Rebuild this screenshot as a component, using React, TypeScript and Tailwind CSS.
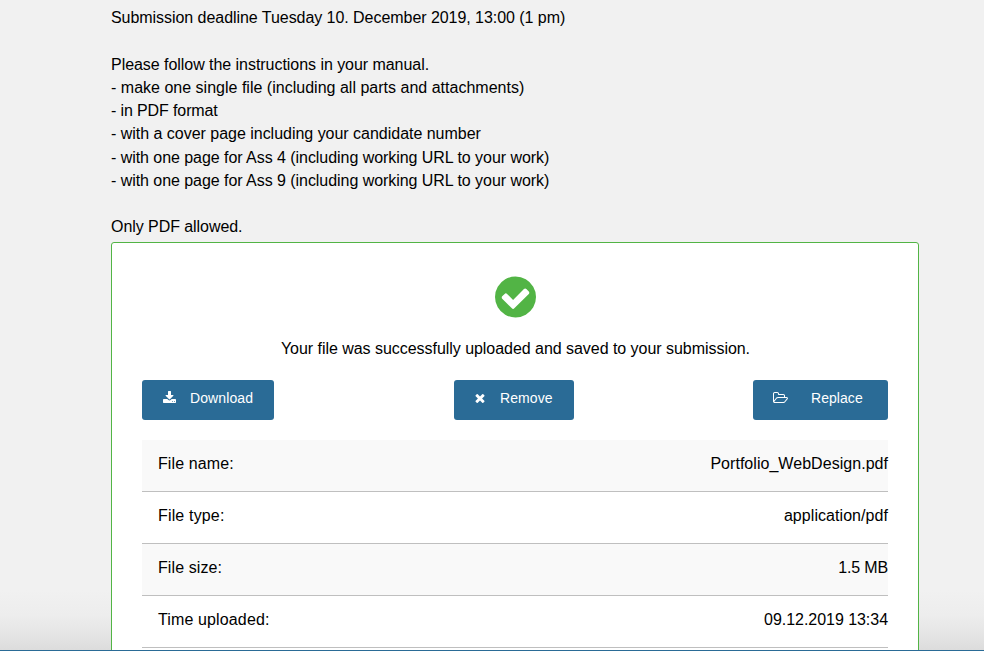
const instructions = [
  { text: "Submission deadline Tuesday 10. December 2019, 13:00 (1 pm)", style: "h-[23px] tracking-[-0.05px]" },
  { text: "", style: "h-6" },
  { text: "Please follow the instructions in your manual.", style: "h-[23px] tracking-[-0.045px]" },
  { text: "- make one single file (including all parts and attachments)", style: "h-[23px] tracking-[0.01px]" },
  { text: "- in PDF format", style: "h-[23px] tracking-[-0.12px]" },
  { text: "- with a cover page including your candidate number", style: "h-6 tracking-[-0.02px]" },
  { text: "- with one page for Ass 4 (including working URL to your work)", style: "h-[23px] tracking-[-0.05px]" },
  { text: "- with one page for Ass 9 (including working URL to your work)", style: "h-[23px] tracking-[-0.05px]" },
  { text: "", style: "h-[23px]" },
  { text: "Only PDF allowed.", style: "h-[23px] tracking-[-0.06px]" },
];

const details = [
  { label: "File name:", value: "Portfolio_WebDesign.pdf", labelStyle: "tracking-[0.1px]", valueStyle: "tracking-[0.04px]" },
  { label: "File type:", value: "application/pdf", labelStyle: "tracking-[0.16px]", valueStyle: "tracking-[0.06px]" },
  { label: "File size:", value: "1.5 MB", labelStyle: "tracking-[0.1px]", valueStyle: "tracking-[-0.15px]" },
  { label: "Time uploaded:", value: "09.12.2019 13:34", labelStyle: "tracking-[0.13px]", valueStyle: "tracking-[-0.04px]" },
];

const icons = {
  check: "M1284 734q0-28-18-46l-91-90q-19-19-45-19t-45 19l-408 407-226-226q-19-19-45-19t-45 19l-91 90q-18 18-18 46 0 27 18 45l362 362q19 19 45 19 27 0 46-19l543-543q18-18 18-45zm252 162q0 209-103 385.5t-279.5 279.5-385.5 103-385.5-103-279.5-279.5-103-385.5 103-385.5 279.5-279.5 385.5-103 385.5 103 279.5 279.5 103 385.5z",
  download: "M1344 1344q0-26-19-45t-45-19-45 19-19 45 19 45 45 19 45-19 19-45zm256 0q0-26-19-45t-45-19-45 19-19 45 19 45 45 19 45-19 19-45zm128-224v320q0 40-28 68t-68 28h-1472q-40 0-68-28t-28-68v-320q0-40 28-68t68-28h465l135 136q58 56 136 56t136-56l136-136h464q40 0 68 28t28 68zm-325-569q17 41-14 70l-448 448q-18 19-45 19t-45-19l-448-448q-31-29-14-70 17-39 59-39h256v-448q0-26 19-45t45-19h256q26 0 45 19t19 45v448h256q42 0 59 39z",
  times: "M1490 1322q0 40-28 68l-136 136q-28 28-68 28t-68-28l-294-294-294 294q-28 28-68 28t-68-28l-136-136q-28-28-28-68t28-68l294-294-294-294q-28-28-28-68t28-68l136-136q28-28 68-28t68 28l294 294 294-294q28-28 68-28t68 28l136 136q28 28 28 68t-28 68l-294 294 294 294q28 28 28 68z",
  folder: "M1845 931q0-35-53-35h-1088q-40 0-85.5 21.5t-71.5 52.5l-294 363q-18 24-18 40 0 35 53 35h1088q40 0 86-22t71-53l294-363q18-22 18-39zm-1141-163h768v-160q0-40-28-68t-68-28h-576q-40 0-68-28t-28-68v-64q0-40-28-68t-68-28h-320q-40 0-68 28t-28 68v853l256-315q44-53 116-87.5t140-34.5zm1269 163q0 62-46 120l-295 363q-43 53-116 87.5t-140 34.5h-1088q-92 0-158-66t-66-158v-960q0-92 66-158t158-66h320q92 0 158 66t66 158v32h544q92 0 158 66t66 158v160h192q54 0 99 24.5t67 70.5q15 32 15 68z",
};

function Icon({ path, viewBox, className }: { path: string; viewBox: string; className: string }) {
  return (
    <svg viewBox={viewBox} className={className} fill="currentColor" aria-hidden="true">
      <path d={path} />
    </svg>
  );
}

export default function App() {
  return (
    <div className="h-[651px] overflow-hidden border-b border-[#2a6b96] bg-[#f1f1f1] bg-[linear-gradient(to_bottom,#f1f1f1_590px,#ededed_615px,#e6e6e6_632px,#dcdcdc_650px)] pl-[111px] pt-[6px] font-['Liberation_Sans',Arial,sans-serif] text-base text-black">
      <div className="leading-[23px]">
        {instructions.map(({ text, style }, i) => (
          <p key={i} className={`whitespace-nowrap ${style}`}>{text}</p>
        ))}
      </div>
      <section className="mt-1 h-[500px] w-[808px] rounded-[3px] border border-[#52b445] bg-white px-[30px] pt-[30px]">
        <Icon path={icons.check} viewBox="0 0 1536 1792" className="ml-[353px] h-12 w-[41px] text-[#52b445]" />
        <p className="mt-4 pl-px text-center leading-6 tracking-[-0.04px]">Your file was successfully uploaded and saved to your submission.</p>
        <div className="mt-[19px] flex justify-between text-sm text-white">
          <button className="flex h-10 w-[132px] items-center rounded-[3px] bg-[#2a6b96] pb-1 pl-[21px] tracking-[0.1px]">
            <Icon path={icons.download} viewBox="64 0 1664 1792" className="mr-[14px] h-[14px] w-[13px]" />Download
          </button>
          <button className="flex h-10 w-[120px] items-center rounded-[3px] bg-[#2a6b96] pb-1 pl-[20.5px] tracking-[0.1px]">
            <Icon path={icons.times} viewBox="110 0 1572 1792" className="mr-[14px] h-[14px] w-3" />Remove
          </button>
          <button className="flex h-10 w-[135px] items-center rounded-[3px] bg-[#2a6b96] pb-1 pl-[20px] tracking-[0.05px]">
            <Icon path={icons.folder} viewBox="64 0 1920 1792" className="mr-[23px] h-[14px] w-[15px]" />Replace
          </button>
        </div>
        <dl className="mt-5">
          {details.map(({ label, value, labelStyle, valueStyle }) => (
            <div key={label} className="flex h-[52px] justify-between border-b border-[#bfbfbf] pl-4 pt-3 leading-6 odd:bg-[#f9f9f9]">
              <dt className={labelStyle}>{label}</dt>
              <dd className={valueStyle}>{value}</dd>
            </div>
          ))}
        </dl>
      </section>
    </div>
  );
}
